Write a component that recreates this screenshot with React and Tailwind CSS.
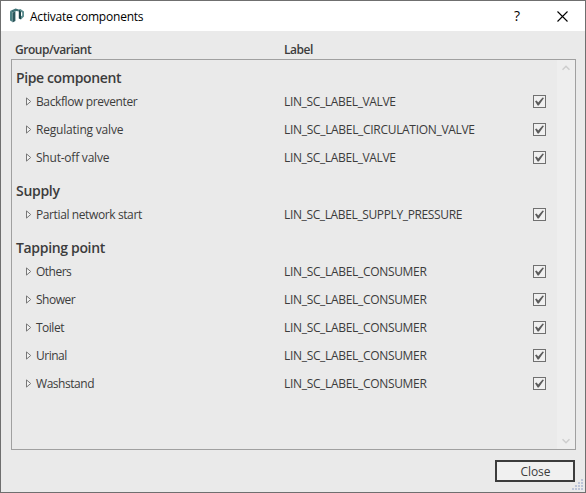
import React from "react";

const groups = [
  {
    name: "Pipe component",
    head: "h-[27px] pt-[8px] tracking-[-0.38px]",
    rows: [
      ["Backflow preventer", "LIN_SC_LABEL_VALVE", "tracking-[-0.38px]", "tracking-[-0.35px]"],
      ["Regulating valve", "LIN_SC_LABEL_CIRCULATION_VALVE", "tracking-[-0.2px]", "tracking-[-0.31px]"],
      ["Shut-off valve", "LIN_SC_LABEL_VALVE", "tracking-[-0.22px]", "tracking-[-0.35px]"],
    ],
  },
  {
    name: "Supply",
    head: "h-[29px] pt-[10px] tracking-[-0.3px]",
    rows: [["Partial network start", "LIN_SC_LABEL_SUPPLY_PRESSURE", "tracking-[-0.39px]", "tracking-[-0.37px]"]],
  },
  {
    name: "Tapping point",
    head: "h-[29px] pt-[10px] tracking-[-0.33px]",
    rows: [
      ["Others", "LIN_SC_LABEL_CONSUMER", "tracking-[-0.5px]", "tracking-[-0.32px]"],
      ["Shower", "LIN_SC_LABEL_CONSUMER", "tracking-[-0.5px]", "tracking-[-0.32px]"],
      ["Toilet", "LIN_SC_LABEL_CONSUMER", "tracking-[-0.5px]", "tracking-[-0.32px]"],
      ["Urinal", "LIN_SC_LABEL_CONSUMER", "tracking-[-0.5px]", "tracking-[-0.32px]"],
      ["Washstand", "LIN_SC_LABEL_CONSUMER", "tracking-[-0.45px]", "tracking-[-0.32px]"],
    ],
  },
];

function Logo() {
  return (
    <svg className="ml-[9px] h-4 w-4 shrink-0" viewBox="0 0 16 16">
      <path d="M0 3 2.6 4.4V14L0 12.6z" fill="#4c8285" />
      <path d="M2.6 4.4 5.4 3.4V13L2.6 14.4z" fill="#2b575c" />
      <path d="M0 3 5.6 0.4 8.8 1.6 8.8 3.6 6.6 3 2.6 4.4z" fill="#3f7276" />
      <path d="M8.8 1.4 11 2.4V11.4L8.8 10.4z" fill="#1c454b" />
      <path d="M8.8 1.4 10.4 1 14 3.4V8.6L11 11.4V8.2L12.2 7.4V4.8L11 3.8z" fill="#5c8e90" />
    </svg>
  );
}

function Checkbox() {
  return (
    <svg className="h-[13px] w-[13px] shrink-0" viewBox="0 0 13 13">
      <rect x="0.5" y="0.5" width="12" height="12" fill="#f0f0f0" stroke="#707070" />
      <path d="M2 6.2 3.6 5.6 5.2 7.6 9.6 2.4 11 2.9 5.8 10.4 4.6 10.4z" fill="#5c5c5c" />
    </svg>
  );
}

function Row({ name, label, nameClass, labelClass }) {
  return (
    <div className="flex h-7 items-center">
      <svg className="mt-px ml-[14px] h-[9px] w-[6px] shrink-0" viewBox="0 0 6 9">
        <path d="M0.5 0.9V8.1L4.7 4.5z" fill="#f4f4f4" stroke="#777" />
      </svg>
      <span className={`mt-[2px] ml-[4px] w-[248px] shrink-0 ${nameClass}`}>{name}</span>
      <span className={`mt-[2px] w-[249px] shrink-0 ${labelClass}`}>{label}</span>
      <Checkbox />
    </div>
  );
}

const dots = [[9, 0], [6, 3], [9, 3], [3, 6], [6, 6], [9, 6], [0, 9], [3, 9], [6, 9], [9, 9]];

export default function App() {
  return (
    <div className="flex h-[493px] w-[586px] flex-col overflow-hidden border border-[#6f6f6f] bg-[#eaeaea] font-['Open_Sans','Noto_Sans',sans-serif] text-[12px] leading-4 whitespace-nowrap text-[#3c3c3c]">
      <div className="flex h-[30px] shrink-0 items-center bg-white text-black">
        <Logo />
        <span className="mt-[2px] ml-[4px] tracking-[-0.22px]">Activate components</span>
        <span className="ml-auto w-[10px] text-center text-[14px] font-medium">?</span>
        <svg className="mr-[17px] ml-[35px] h-[11px] w-[11px]" viewBox="0 0 11 11">
          <path d="M0.5 0.5l10 10M10.5 0.5l-10 10" stroke="#000" strokeWidth="1.1" />
        </svg>
      </div>
      <div className="flex h-[28px] shrink-0 items-center pt-[10px] pl-[14px] font-semibold">
        <span className="w-[269px] tracking-[-0.46px]">Group/variant</span>
        <span className="tracking-[-0.45px]">Label</span>
      </div>
      <div className="ml-[10px] flex h-[391px] w-[565px] shrink-0 border border-[#a0a0a0]">
        <div className="w-[545px]">
          {groups.map((g) => (
            <div key={g.name}>
              <div className={`${g.head} pl-[4px] text-[14px] leading-[20px] font-semibold`}>{g.name}</div>
              {g.rows.map(([name, label, nameClass, labelClass]) => (
                <Row key={name} name={name} label={label} nameClass={nameClass} labelClass={labelClass} />
              ))}
            </div>
          ))}
        </div>
        <div className="flex w-[18px] flex-col items-center justify-between bg-[#eeeeee] py-[5px]">
          <svg className="h-[6px] w-[8px]" viewBox="0 0 8 6">
            <path d="M0.5 4.7 4 1.2l3.5 3.5" fill="none" stroke="#cdcdcd" strokeWidth="1.5" />
          </svg>
          <svg className="h-[6px] w-[8px]" viewBox="0 0 8 6">
            <path d="M0.5 1.2 4 4.7l3.5-3.5" fill="none" stroke="#cdcdcd" strokeWidth="1.5" />
          </svg>
        </div>
      </div>
      <div className="flex grow items-start pt-[10px] pl-[494px]">
        <button className="h-[22px] w-[80px] shrink-0 border-2 border-[#3c3c3c] bg-[#f0f0f0] pt-px pl-px leading-[18px] tracking-[-0.1px]">Close</button>
        <svg className="mt-[19px] -ml-[3px] h-[12px] w-[12px] shrink-0" viewBox="0 0 12 12">
          {dots.map(([x, y]) => (
            <g key={`${x}-${y}`}>
              <rect x={x + 1} y={y + 1} width="1" height="1" fill="#fff" />
              <rect x={x} y={y} width="2" height="2" fill="#bcc4d8" />
            </g>
          ))}
        </svg>
      </div>
    </div>
  );
}
